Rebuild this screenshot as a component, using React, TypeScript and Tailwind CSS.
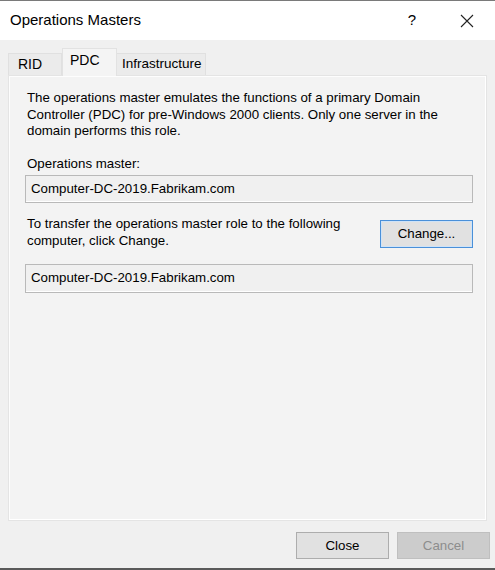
export default function App() {
	const font = { fontFamily: '"Liberation Sans", Arial, sans-serif' };

	return (
		<div
			className="w-[495px] h-[570px] flex flex-col bg-[#f0f0f0] text-black overflow-hidden"
			style={font}
		>
			{/* title bar */}
			<div className="h-[40px] shrink-0 bg-white border-t border-[#7a7a7a] flex items-center">
				<span className="pl-[10px] text-[15px] flex-1">Operations Masters</span>
				<span className="w-[20px] text-center text-[15px] mr-[38px]">?</span>
				<svg width="14" height="14" viewBox="0 0 14 14" className="mr-[21px]">
					<path d="M1 1 L13 13 M13 1 L1 13" stroke="#222" strokeWidth="1.1" fill="none" />
				</svg>
			</div>

			{/* body */}
			<div className="flex-1 flex flex-col px-[8px] pt-[8px]">
				<div className="flex items-end h-[27px] text-[13.5px]">
					<div className="w-[54px] h-[22px] bg-[#ebebeb] border border-b-0 border-[#e0e0e0] flex items-center pl-[9px] text-[14px]">
						RID
					</div>
					<div className="w-[55px] h-[28px] -mb-px bg-[#f4f4f4] border border-b-0 border-[#e2e2e2] flex items-center pl-[7px] pb-[4px] relative z-10 text-[14px]">
						PDC
					</div>
					<div className="w-[89px] h-[22px] bg-[#ebebeb] border border-b-0 border-l-0 border-[#e0e0e0] flex items-center pl-[5px]">
						Infrastructure
					</div>
				</div>

				<div className="w-[479px] h-[446px] bg-[#f3f3f3] border border-[#e4e4e4] shadow-[inset_-1px_-1px_0_#ffffff,inset_1px_1px_0_#fdfdfd] px-[16px] pt-[14px] text-[13.3px] leading-[16.5px]">
					<p className="pl-[2px]">
						The operations master emulates the functions of a primary Domain
						Controller (PDC) for pre-Windows 2000 clients. Only one server in the
						domain performs this role.
					</p>
					<p className="pl-[2px] mt-[16px]">Operations master:</p>
					<div className="mt-[3px] w-[448px] h-[28px] border border-[#b9b9b9] bg-[#f0f0f0] shadow-[inset_0_-1px_0_#ffffff] flex items-center pl-[5px]">
						Computer-DC-2019.Fabrikam.com
					</div>
					<div className="mt-[13px] flex items-start w-[448px]">
						<p className="pl-[2px] flex-1">
							To transfer the operations master role to the following
							<br />
							computer, click Change.
						</p>
						<button className="mt-[4px] w-[93px] h-[28px] bg-[#e1e1e1] border border-[#4a90d9] shadow-[inset_0_0_0_1px_#cfe3f7] flex items-center justify-center">
							Change...
						</button>
					</div>
					<div className="mt-[15px] w-[448px] h-[29px] border border-[#b9b9b9] bg-[#f0f0f0] shadow-[inset_0_-1px_0_#ffffff] flex items-center pl-[5px]">
						Computer-DC-2019.Fabrikam.com
					</div>
				</div>

				<div className="flex justify-end gap-[8px] mt-[11px] mr-[-3px] text-[13.3px]">
					<button className="w-[93px] h-[27px] bg-[#e1e1e1] border border-[#adadad] flex items-center justify-center">
						Close
					</button>
					<button className="w-[93px] h-[27px] bg-[#cccccc] border border-[#bfbfbf] text-[#8d8d8d] flex items-center justify-center">
						Cancel
					</button>
				</div>
			</div>

			<div className="h-[2px] shrink-0 bg-[#5a5a5a]" />
		</div>
	);
}
